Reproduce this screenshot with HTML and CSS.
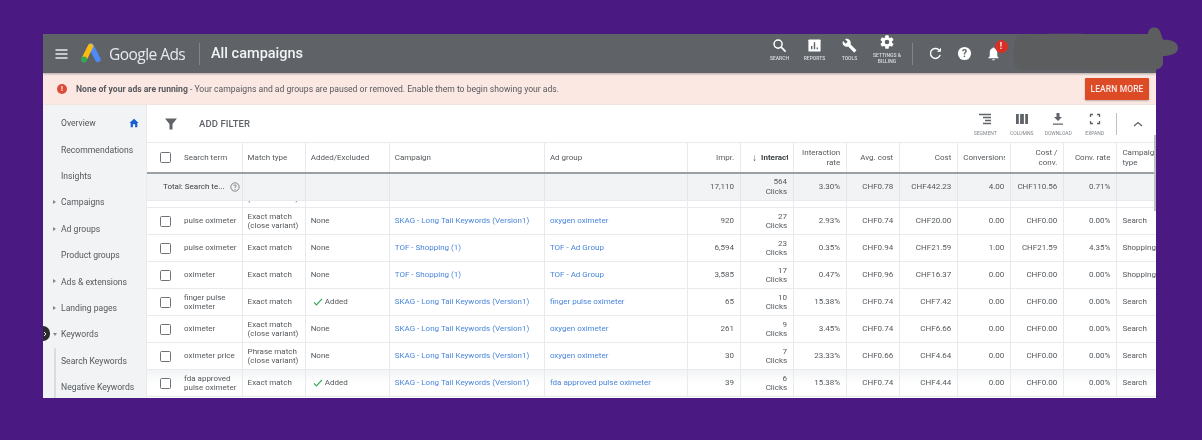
FILE: index.html
```html
<!DOCTYPE html>
<html lang="en">
<head>
<meta charset="utf-8">
<title>Google Ads - All campaigns</title>
<link rel="stylesheet" href="styles.css">
</head>
<body>
<div class="stage">
<div class="app">
  <header class="topbar">
    <svg class="menu" viewBox="0 0 12 10"><path d="M0 1h12M0 5h12M0 9h12" stroke="#e8eaed" stroke-width="1.4"/></svg>
    <svg class="logo" viewBox="0 0 20 20"><path d="M10.5 3 L17 15.5" stroke="#4c8bf5" stroke-width="5.4" stroke-linecap="round"/><path d="M10 3.2 L4.6 14" stroke="#f9bc15" stroke-width="5.2" stroke-linecap="round"/><circle cx="3.8" cy="15.8" r="2.9" fill="#34a853"/></svg>
    <span class="brand">Google Ads</span>
    <span class="title-sep"></span>
    <span class="page-title">All campaigns</span>
    <nav class="tools">
      <div class="tool"><svg viewBox="0 0 16 16"><circle cx="6.5" cy="6.5" r="4.3" fill="none" stroke="#fff" stroke-width="1.6"/><path d="M9.8 9.8 14.5 14.5" stroke="#fff" stroke-width="1.8"/></svg><span>SEARCH</span></div>
      <div class="tool"><svg viewBox="0 0 16 16"><rect x="1.5" y="1.5" width="13" height="13" rx="1" fill="#fff"/><path d="M5 12V8.5M8 12V4.5M11 12V10" stroke="#5f6368" stroke-width="1.5"/></svg><span>REPORTS</span></div>
      <div class="tool"><svg viewBox="0 0 24 24"><path fill="#fff" d="M22.700 19l-9.100-9.100c.9-2.300.4-5-1.500-6.900-2-2-5-2.400-7.400-1.300L9 6 6 9 1.600 4.700C.4 7.100.9 10.100 2.900 12.100c1.900 1.900 4.600 2.400 6.900 1.500l9.100 9.100c.4.400 1 .4 1.400 0l2.300-2.300c.5-.4.5-1.100.1-1.400z"/></svg><span>TOOLS</span></div>
      <div class="tool tool-wide"><svg viewBox="0 0 24 24"><path fill="#fff" d="M19.400 13c.04-.3.1-.7.1-1s-.03-.7-.1-1l2.100-1.600c.2-.15.25-.4.12-.64l-2-3.460c-.12-.22-.4-.3-.6-.22l-2.500 1c-.5-.4-1.100-.7-1.700-1l-.4-2.650A.5.5 0 0 0 14 2h-4a.5.5 0 0 0-.5.420L9.100 5.070c-.6.250-1.200.600-1.700 1l-2.500-1c-.2-.08-.5 0-.6.220l-2 3.460c-.13.220-.07.500.12.640L4.500 11c-.05.300-.1.700-.1 1s.03.700.1 1l-2.100 1.600c-.2.150-.25.400-.12.640l2 3.460c.12.220.4.300.6.220l2.500-1c.5.400 1.100.700 1.700 1l.4 2.650c.04.240.25.420.5.420h4c.25 0 .46-.18.500-.42l.4-2.650c.6-.25 1.200-.6 1.700-1l2.500 1c.2.080.5 0 .6-.22l2-3.460c.13-.22.07-.5-.12-.64ZM12 15.500a3.500 3.500 0 1 1 0-7 3.500 3.500 0 0 1 0 7Z"/></svg><span>SETTINGS &amp;<br>BILLING</span></div>
    </nav>
    <span class="tools-sep"></span>
    <svg class="act act-refresh" viewBox="0 0 16 16"><path d="M13 9.500A5.300 5.300 0 1 1 11.500 4" fill="none" stroke="#fff" stroke-width="1.500"/><path d="M9.500 6.200h4.300V1.900Z" fill="#fff"/></svg>
    <svg class="act act-help" viewBox="0 0 16 16"><circle cx="8" cy="8" r="7" fill="#fff"/><text x="8" y="11.800" text-anchor="middle" class="help-mark">?</text></svg>
    <div class="bell">
      <svg class="act" viewBox="0 0 16 16"><path d="M8 1.500c.7 0 1 .5 1 1 2 .5 3 2.200 3 4.300V11l1.500 1.500v.5h-11v-.5L4 11V6.800c0-2.100 1-3.800 3-4.300 0-.5.300-1 1-1ZM6.600 14h2.800c0 .8-.6 1.300-1.400 1.300S6.600 14.800 6.600 14Z" fill="#fff"/></svg>
      <span class="badge">!</span>
    </div>
    <svg class="redact" viewBox="0 0 166 46"><path d="M5 9C40 6 100 9 135 8c0-8 11-9 13 0 1 3 1 5 3 6 8-1 14 3 14 8 0 6-8 8-15 8l0 8c-2 6-8 6-14 6-40 1-90 0-125 0-7 0-10-3-10-9C0 28 0 14 5 9Z" fill="#5b5d5f"/></svg>
  </header>

  <section class="banner">
    <span class="alert-dot">!</span>
    <p class="banner-text"><b>None of your ads are running</b> - Your campaigns and ad groups are paused or removed. Enable them to begin showing your ads.</p>
    <button class="learn">LEARN MORE</button>
  </section>

  <div class="main">
    <aside class="side">
      <a class="nav-item nav-home">Overview<svg viewBox="0 0 12 12"><path d="M6 1 11.500 6H10v5H7.300V7.600H4.700V11H2V6H.5Z" fill="#1a5fd0"/></svg></a>
      <a class="nav-item">Recommendations</a>
      <a class="nav-item">Insights</a>
      <a class="nav-item nav-arrow">Campaigns</a>
      <a class="nav-item nav-arrow">Ad groups</a>
      <a class="nav-item">Product groups</a>
      <a class="nav-item nav-arrow">Ads &amp; extensions</a>
      <a class="nav-item nav-arrow">Landing pages</a>
      <a class="nav-item nav-arrow nav-open">Keywords</a>
      <div class="nav-sub">
        <a class="nav-item">Search Keywords</a>
        <a class="nav-item">Negative Keywords</a>
      </div>
    </aside>

    <div class="content">
      <div class="toolbar">
        <svg class="filter" viewBox="0 0 12 12"><path d="M0 .5h12L7.500 6v5.500h-3V6Z" fill="#5f6368"/></svg>
        <span class="add-filter">ADD FILTER</span>
        <div class="tb-tools">
          <div class="tb-tool"><svg viewBox="0 0 14 12"><path d="M1 1.500h12M5 4.500h8M7 7.500h6M5 10.500h8" stroke="#5f6368" stroke-width="1.300"/></svg><span>SEGMENT</span></div>
          <div class="tb-tool"><svg viewBox="0 0 14 12"><path d="M1 1h2.800v10H1ZM5.100 1h3.800v10H5.100ZM10.200 1H13v10h-2.800Z" fill="#5f6368"/></svg><span>COLUMNS</span></div>
          <div class="tb-tool"><svg viewBox="0 0 14 12"><path d="M5.500 0h3v4h2.500L7 8 3 4h2.500ZM2 10.500h10v1.300H2Z" fill="#5f6368"/></svg><span>DOWNLOAD</span></div>
          <div class="tb-tool"><svg viewBox="0 0 14 12"><path d="M2.500 4V1.500H5M9 1.500h2.500V4M2.500 8v2.500H5M9 10.500h2.500V8" fill="none" stroke="#5f6368" stroke-width="1.300"/></svg><span>EXPAND</span></div>
        </div>
        <span class="tb-sep"></span>
        <svg class="collapse" viewBox="0 0 10 6"><path d="M1 5 5 1.500 9 5" fill="none" stroke="#5f6368" stroke-width="1.300"/></svg>
      </div>

      <table class="grid">
        <colgroup>
          <col class="c-term"><col class="c-match"><col class="c-added"><col class="c-camp"><col class="c-group">
          <col class="c-num"><col class="c-num"><col class="c-num"><col class="c-num"><col class="c-cost"><col class="c-num"><col class="c-num"><col class="c-num"><col class="c-type">
        </colgroup>
        <thead>
          <tr class="head">
            <th><div class="term"><span class="box"></span><span>Search term</span></div></th>
            <th>Match type</th><th>Added/Excluded</th><th>Campaign</th><th>Ad group</th>
            <th class="r">Impr.</th>
            <th class="sorted"><div class="sort-clip"><span class="arrow">↓</span><b>Interactions</b></div></th>
            <th class="r">Interaction<br>rate</th>
            <th class="r">Avg. cost</th><th class="r">Cost</th><th><div class="clip">Conversions</div></th>
            <th class="r">Cost /<br>conv.</th><th class="r">Conv. rate</th><th>Campaign<br>type</th>
          </tr>
          <tr class="total">
            <td><div class="total-label">Total: Search te...<svg viewBox="0 0 12 12"><circle cx="6" cy="6" r="5" fill="none" stroke="#5f6368" stroke-width=".9"/><path d="M4.500 4.800C4.500 3 7.500 3 7.500 4.800 7.500 6 6 5.800 6 7.200M6 8.200v1" fill="none" stroke="#5f6368" stroke-width=".9"/></svg></div></td>
            <td></td><td></td><td></td><td></td>
            <td class="r">17,110</td><td class="r">564<br>Clicks</td><td class="r">3.30%</td><td class="r">CHF0.78</td><td class="r">CHF442.23</td><td class="r">4.00</td><td class="r">CHF110.56</td><td class="r">0.71%</td><td></td>
          </tr>
        </thead>
        <tbody>
          <tr class="sliver">
            <td></td><td><div class="peek">(close variant)</div></td><td></td><td></td><td></td><td></td><td class="r"><div class="peek">Clicks</div></td><td></td><td></td><td></td><td></td><td></td><td></td><td></td>
          </tr>
          <tr>
            <td><div class="term"><span class="box"></span><span>pulse oximeter</span></div></td><td>Exact match<br>(close variant)</td><td>None</td><td><a>SKAG - Long Tail Keywords (Version1)</a></td><td><a>oxygen oximeter</a></td>
            <td class="r">920</td><td class="r">27<br>Clicks</td><td class="r">2.93%</td><td class="r">CHF0.74</td><td class="r">CHF20.00</td><td class="r">0.00</td><td class="r">CHF0.00</td><td class="r">0.00%</td><td>Search</td>
          </tr>
          <tr>
            <td><div class="term"><span class="box"></span><span>pulse oximeter</span></div></td><td>Exact match</td><td>None</td><td><a>TOF - Shopping (1)</a></td><td><a>TOF - Ad Group</a></td>
            <td class="r">6,594</td><td class="r">23<br>Clicks</td><td class="r">0.35%</td><td class="r">CHF0.94</td><td class="r">CHF21.59</td><td class="r">1.00</td><td class="r">CHF21.59</td><td class="r">4.35%</td><td>Shopping</td>
          </tr>
          <tr>
            <td><div class="term"><span class="box"></span><span>oximeter</span></div></td><td>Exact match</td><td>None</td><td><a>TOF - Shopping (1)</a></td><td><a>TOF - Ad Group</a></td>
            <td class="r">3,585</td><td class="r">17<br>Clicks</td><td class="r">0.47%</td><td class="r">CHF0.96</td><td class="r">CHF16.37</td><td class="r">0.00</td><td class="r">CHF0.00</td><td class="r">0.00%</td><td>Shopping</td>
          </tr>
          <tr>
            <td><div class="term"><span class="box"></span><span>finger pulse<br>oximeter</span></div></td><td>Exact match</td><td><span class="added"><svg viewBox="0 0 12 10"><path d="M1 5.500 4 8.500 11 1" fill="none" stroke="#34a853" stroke-width="1.500"/></svg>Added</span></td><td><a>SKAG - Long Tail Keywords (Version1)</a></td><td><a>finger pulse oximeter</a></td>
            <td class="r">65</td><td class="r">10<br>Clicks</td><td class="r">15.38%</td><td class="r">CHF0.74</td><td class="r">CHF7.42</td><td class="r">0.00</td><td class="r">CHF0.00</td><td class="r">0.00%</td><td>Search</td>
          </tr>
          <tr>
            <td><div class="term"><span class="box"></span><span>oximeter</span></div></td><td>Exact match<br>(close variant)</td><td>None</td><td><a>SKAG - Long Tail Keywords (Version1)</a></td><td><a>oxygen oximeter</a></td>
            <td class="r">261</td><td class="r">9<br>Clicks</td><td class="r">3.45%</td><td class="r">CHF0.74</td><td class="r">CHF6.66</td><td class="r">0.00</td><td class="r">CHF0.00</td><td class="r">0.00%</td><td>Search</td>
          </tr>
          <tr>
            <td><div class="term"><span class="box"></span><span>oximeter price</span></div></td><td>Phrase match<br>(close variant)</td><td>None</td><td><a>SKAG - Long Tail Keywords (Version1)</a></td><td><a>oxygen oximeter</a></td>
            <td class="r">30</td><td class="r">7<br>Clicks</td><td class="r">23.33%</td><td class="r">CHF0.66</td><td class="r">CHF4.64</td><td class="r">0.00</td><td class="r">CHF0.00</td><td class="r">0.00%</td><td>Search</td>
          </tr>
          <tr class="last">
            <td><div class="term"><span class="box"></span><span>fda approved<br>pulse oximeter</span></div></td><td>Exact match</td><td><span class="added"><svg viewBox="0 0 12 10"><path d="M1 5.500 4 8.500 11 1" fill="none" stroke="#34a853" stroke-width="1.500"/></svg>Added</span></td><td><a>SKAG - Long Tail Keywords (Version1)</a></td><td><a>fda approved pulse oximeter</a></td>
            <td class="r">39</td><td class="r">6<br>Clicks</td><td class="r">15.38%</td><td class="r">CHF0.74</td><td class="r">CHF4.44</td><td class="r">0.00</td><td class="r">CHF0.00</td><td class="r">0.00%</td><td>Search</td>
          </tr>
        </tbody>
      </table>
      <span class="scrollbar"></span>
    </div>
  </div>
</div>
<span class="rail-toggle"><svg viewBox="0 0 6 8"><path d="M1.500 1 4.500 4 1.500 7" fill="none" stroke="#fff" stroke-width="1.300"/></svg></span>
</div>
</body>
</html>
```

FILE: styles.css
```css
* { box-sizing: border-box; }
html, body { margin: 0; height: 100%; }
body { background: #4a1a82; font-family: Roboto, "Liberation Sans", sans-serif; overflow: hidden; }
.stage { position: relative; padding: 34px 46px 42px 43px; height: 440px; filter: blur(.6px); }
.app { position: relative; height: 364px; background: #fff; display: flex; flex-direction: column; }

.topbar { position: relative; flex: 0 0 39px; background: #5f6368; display: flex; align-items: center; color: #fff; box-shadow: 0 1px 2px rgba(60,64,67,.4); z-index: 2; }
.menu { width: 13px; height: 10px; margin-left: 12px; }
.logo { width: 21px; height: 21px; margin-left: 12px; }
.brand { margin-left: 8px; font: 400 15.500px "Open Sans", sans-serif; letter-spacing: -.55px; color: #e8eaed; width: 79px; white-space: nowrap; }
.title-sep { width: 1px; height: 22px; background: #80868b; margin-left: 11px; }
.page-title { margin-left: 11px; font-size: 14.500px; font-weight: 500; color: #f1f3f4; white-space: nowrap; }
.tools { margin-left: auto; display: flex; align-items: flex-start; margin-top: -5px; }
.tool { width: 35px; display: flex; flex-direction: column; align-items: center; font-size: 5px; line-height: 5.500px; color: #dadce0; text-align: center; font-weight: 500; white-space: nowrap; }
.tool svg { width: 15px; height: 15px; margin-bottom: 3px; }
.tool-wide { width: 40px; margin-top: -4px; }
.tool-wide svg { margin-bottom: 3px; width: 16px; height: 16px; }
.tools-sep { width: 1px; height: 22px; background: #80868b; margin: 0 15px 0 5px; }
.act { width: 15px; height: 15px; display: block; }
.act-help { margin-left: 14px; }
.help-mark { font: 700 11px Roboto, sans-serif; fill: #5f6368; }
.bell { position: relative; margin-left: 14px; margin-right: 155px; }
.badge { position: absolute; left: 8.500px; top: -6.500px; width: 13px; height: 13px; border-radius: 50%; background: #d93025; font-size: 8.500px; font-weight: 700; line-height: 13px; text-align: center; }
.redact { position: absolute; left: 970px; top: -8px; width: 166px; height: 46px; overflow: visible; z-index: 3; }

.banner { flex: 0 0 32px; background: #fce8e3; display: flex; align-items: center; padding: 0 7px 0 14px; border-bottom: 1px solid #f1e4e0; }
.alert-dot { width: 10px; height: 10px; border-radius: 50%; background: #dd4b39; color: #fff; font-size: 7px; font-weight: 700; line-height: 10px; text-align: center; flex: none; }
.banner-text { margin: 0 0 0 9px; font-size: 8.600px; color: #55595d; flex: 1; white-space: nowrap; }
.banner-text b { font-weight: 700; }
.learn { width: 64px; height: 22px; padding: 0; border: 0; border-radius: 1px; background: #dd4b26; color: #fbe9e7; font: 500 8.500px Roboto, sans-serif; box-shadow: 0 1px 2px rgba(0,0,0,.25); letter-spacing: .1px; }

.main { flex: 1; display: flex; min-height: 0; overflow: hidden; }
.side { flex: 0 0 104px; background: #f1f3f4; padding-top: 5px; overflow: hidden; border-right: 1px solid #e8eaed; }
.nav-item { display: flex; align-items: center; height: 26.400px; padding-left: 18px; font-size: 8.600px; color: #55595d; position: relative; white-space: nowrap; }
.nav-home { justify-content: space-between; padding-right: 7px; }
.nav-home svg { width: 10px; height: 10px; }
.nav-arrow::before { content: ""; position: absolute; left: 10px; top: 11px; border-left: 3px solid #80868b; border-top: 2px solid transparent; border-bottom: 2px solid transparent; }
.nav-open::before { left: 9.500px; top: 12px; border-top: 3px solid #80868b; border-left: 2px solid transparent; border-right: 2px solid transparent; border-bottom: 0; }
.nav-sub { margin-left: 11px; border-left: 2px solid #dadce0; }
.nav-sub .nav-item { padding-left: 5px; }

.content { position: relative; flex: 1; min-width: 0; overflow: hidden; }
.toolbar { height: 38px; display: flex; align-items: center; padding-left: 18px; border-bottom: 1px solid #e8eaed; }
.filter { width: 12px; height: 12px; }
.add-filter { margin-left: 22px; font-size: 9.500px; font-weight: 500; color: #5f6368; letter-spacing: .1px; }
.tb-tools { margin-left: auto; display: flex; }
.tb-tool { width: 36.500px; display: flex; flex-direction: column; align-items: center; font-size: 5px; color: #80868b; white-space: nowrap; margin-top: 2px; }
.tb-tool svg { width: 14px; height: 12px; margin-bottom: 5px; }
.tb-sep { width: 1px; height: 22px; background: #bdc1c6; margin-left: 3px; }
.collapse { width: 10px; height: 6px; margin: 0 13px 0 16px; }

.grid { width: 1009px; table-layout: fixed; border-collapse: collapse; font-size: 8px; color: #55595d; }
.c-term { width: 95px; } .c-match { width: 63px; } .c-added { width: 84px; } .c-camp { width: 155px; } .c-group { width: 143px; }
.c-num { width: 53px; } .c-cost { width: 58px; } .c-type { width: 39px; }
.grid th, .grid td { padding: 0 5px; text-align: left; font-weight: 400; white-space: nowrap; overflow: hidden; border-right: 1px solid #e8eaed; border-bottom: 1px solid #e8eaed; line-height: 9.500px; }
.grid tbody td { padding-top: 1px; }
.grid th:last-child, .grid td:last-child { border-right: 0; }
.grid tr { height: 27px; }
.grid .head { height: 30px; }
.grid .head th { border-bottom: 2px solid #9aa0a6; }
.grid .total { height: 27px; }
.grid .total td { background: #f1f3f4; border-right-color: #e3e5e8; }
.grid .sliver { height: 7px; }
.grid .sliver td { line-height: 7px; padding-top: 0; }
.grid .r { text-align: right; padding-right: 6px; }
.grid th.sorted { padding: 0 5px 0 11px; }
.clip { overflow: hidden; }
.sort-clip { display: flex; align-items: center; gap: 4px; overflow: hidden; color: #3c4043; }
.sorted b { font-weight: 700; }
.arrow { font-size: 10px; font-weight: 400; color: #5f6368; }
.grid a { color: #4a86dc; }
.last td { background: linear-gradient(#f1f3f4, #fff 55%); }
.term { display: flex; align-items: center; margin-left: 8px; gap: 13px; white-space: nowrap; }
.box { flex: none; width: 11px; height: 11px; border: 1.300px solid #6f7377; border-radius: 1.500px; background: #fff; }
.total-label { display: flex; align-items: center; margin-left: 11px; gap: 5px; color: #3c4043; }
.total-label svg { width: 10px; height: 10px; flex: none; }
.peek { height: 7px; overflow: hidden; display: flex; align-items: flex-end; padding-bottom: 4px; line-height: 9px; margin-top: -1px; }
.r .peek { justify-content: flex-end; }
.added { display: inline-flex; align-items: center; gap: 2px; margin-left: 2px; margin-top: 2px; }
.added svg { width: 10px; height: 8px; }
.scrollbar { position: absolute; right: 0; top: 30px; width: 2px; height: 76px; background: #bdc1c6; }

.rail-toggle { position: absolute; left: 43px; top: 326px; width: 7px; height: 15px; border-radius: 0 8px 8px 0; background: #2b2b2e; display: flex; align-items: center; overflow: hidden; }
.rail-toggle svg { width: 4px; height: 6px; flex: none; }
```
